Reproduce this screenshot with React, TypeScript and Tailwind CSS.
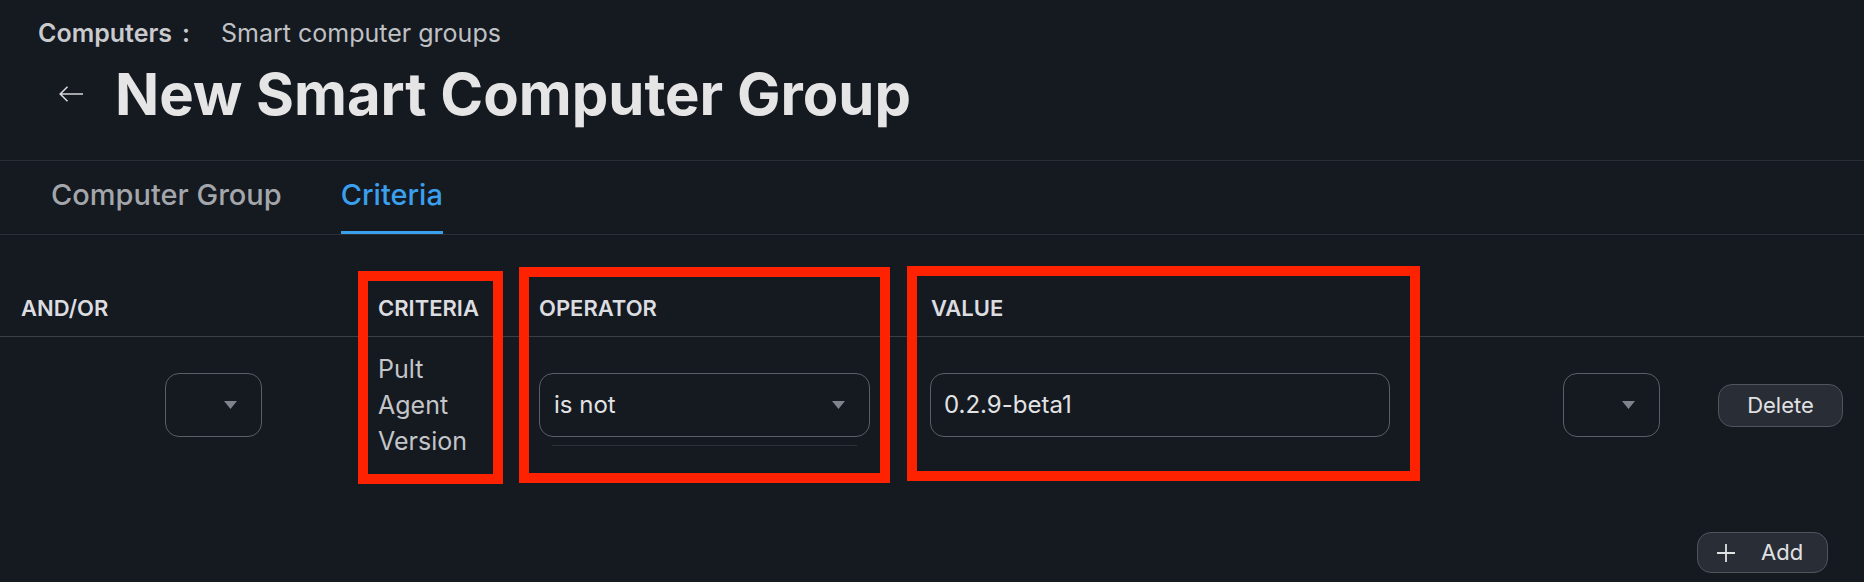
import type { ReactNode } from 'react';

function Caret() {
  return (
    <svg width="13" height="8" viewBox="0 0 13 8" className="shrink-0">
      <path d="M0 0H13L6.5 8Z" fill="#7f848c" />
    </svg>
  );
}

function SelectBox({ width, children }: { width: string; children?: ReactNode }) {
  return (
    <div
      className={`${width} h-[64px] flex items-center justify-between rounded-[14px] border border-[#5a5e66] pl-[14px] pr-[24px] text-[24px] text-[#e2e3e5]`}
    >
      <span>{children}</span>
      <Caret />
    </div>
  );
}

// annotation frames drawn on top of the screenshot
const FRAMES = [
  'left-[358px] top-[271px] w-[145px] h-[213px]',
  'left-[519px] top-[267px] w-[371px] h-[216px]',
  'left-[907px] top-[266px] w-[513px] h-[215px]',
];

export default function App() {
  return (
    <div className="relative w-[1864px] h-[582px] overflow-hidden bg-[#151920] font-['Inter',sans-serif] text-[#e4e4e6]">
      {/* Header */}
      <header className="border-b border-[#2a2e36] pb-[37px]">
        <div className="flex items-center pl-[38px] pt-[17px] text-[25px] leading-[32px]">
          <span className="font-semibold text-[#c9cacd]">Computers</span>
          <span className="ml-[10px] font-semibold text-[#c9cacd]">:</span>
          <span className="ml-[31px] text-[#bfc1c4]">Smart computer groups</span>
        </div>
        <div className="mt-[16px] flex h-[58px] items-center">
          <button className="ml-[59px] flex h-[24px] w-[24px] items-center text-[#d4d5d8]">
            <svg width="24" height="16" viewBox="0 0 24 16" fill="none" stroke="currentColor" strokeWidth="1.6">
              <path d="M1 8H24M8.5 0.8L1.2 8L8.5 15.2" />
            </svg>
          </button>
          <h1 className="ml-[32px] text-[58px] font-bold leading-[58px] text-[#e5e5e6]">
            New Smart Computer Group
          </h1>
        </div>
      </header>

      {/* Tabs */}
      <nav className="flex h-[74px] gap-[59px] border-b border-[#2a2e36] pl-[51px]">
        <div className="h-[73px] pt-[17px] text-[29px] font-medium leading-[34px] text-[#a3a6ab]">
          Computer Group
        </div>
        <div className="h-[73px] border-b-[3px] border-[#3aa0ee] pt-[17px] text-[29px] font-medium leading-[34px] text-[#3aa0ee]">
          Criteria
        </div>
      </nav>

      {/* Criteria table */}
      <div className="flex h-[102px] items-end border-b border-[#3a3e45] pb-[14px] text-[22px] font-semibold leading-[28px] text-[#dcdde0]">
        <div className="w-[358px] pl-[21px]">AND/OR</div>
        <div className="w-[161px] pl-[20px]">CRITERIA</div>
        <div className="w-[390px] pl-[20px]">OPERATOR</div>
        <div className="pl-[22px]">VALUE</div>
      </div>

      <div className="flex items-start">
        <div className="w-[145px]" />
        <div className="w-[213px] pl-[20px] pt-[36px]">
          <SelectBox width="w-[97px]" />
        </div>
        <div className="w-[161px] pl-[20px] pt-[14px] text-[25px] leading-[36px] text-[#c3c5c8]">
          <div>Pult</div>
          <div>Agent</div>
          <div>Version</div>
        </div>
        <div className="w-[390px] pl-[20px] pt-[36px]">
          <div className="w-[331px]">
            <SelectBox width="w-[331px]">is not</SelectBox>
            <div className="mx-[13px] mt-[8px] h-px bg-[#2c3038]" />
          </div>
        </div>
        <div className="w-[634px] pl-[21px] pt-[36px]">
          <div className="flex h-[64px] w-[460px] items-center rounded-[14px] border border-[#5a5e66] pl-[13px] text-[24px] text-[#e2e3e5]">
            0.2.9-beta1
          </div>
        </div>
        <div className="w-[155px] pl-[20px] pt-[36px]">
          <SelectBox width="w-[97px]" />
        </div>
        <div className="pl-[20px] pt-[47px]">
          <button className="flex h-[43px] w-[125px] items-center justify-center rounded-[14px] border border-[#50545c] bg-[#292d35] text-[22px] text-[#e0e1e3]">
            Delete
          </button>
        </div>
      </div>

      <div className="mt-[73px] flex justify-end pr-[36px]">
        <button className="flex h-[41px] w-[131px] items-center rounded-[14px] border border-[#50545c] bg-[#292d35] pl-[19px] text-[22px] text-[#e0e1e3]">
          <svg width="18" height="18" viewBox="0 0 18 18" stroke="currentColor" strokeWidth="1.8">
            <path d="M9 0V18M0 9H18" />
          </svg>
          <span className="ml-[26px]">Add</span>
        </button>
      </div>

      {FRAMES.map((f) => (
        <div key={f} className={`pointer-events-none absolute ${f} border-[10px] border-[#ff2200]`} />
      ))}
    </div>
  );
}
